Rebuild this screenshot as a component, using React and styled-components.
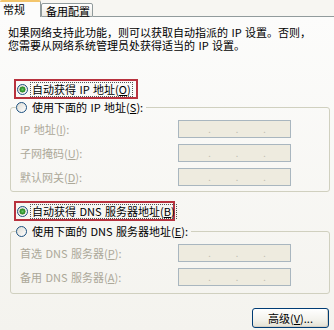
import React from 'react';
import styled, {createGlobalStyle} from "styled-components";

const Global = createGlobalStyle`
html, body{
    margin: 0;
    padding: 0;
    background: #f7f6f2;
}
body{
    font-family: "Noto Sans CJK SC", "Noto Sans", sans-serif;
    font-size: 11px;
    color: #000;
    word-spacing: 1px;
}
`;

export default function App() {
    return (
        <Window>
            <Global/>
            <TabStrip>
                <Tab $active>常规</Tab>
                <Tab>备用配置</Tab>
                <TabFill/>
            </TabStrip>
            <Panel>
                <Intro>
                    <IntroLine>如果网络支持此功能，则可以获取自动指派的 IP 设置。否则，</IntroLine>
                    <IntroLine>您需要从网络系统管理员处获得适当的 IP 设置。</IntroLine>
                </Intro>

                <Highlight $top={28} $width={124}>
                    <Radio $checked/>
                    <Focus>自动获得 IP 地址(<u>O</u>)</Focus>
                </Highlight>

                <Group $top={2} $pb={5}>
                    <Legend>
                        <Radio/>
                        <span>使用下面的 IP 地址(<u>S</u>):</span>
                    </Legend>
                    <Field label={<>IP 地址(<u>I</u>):</>}/>
                    <Field label={<>子网掩码(<u>U</u>):</>}/>
                    <Field label={<>默认网关(<u>D</u>):</>}/>
                </Group>

                <Highlight $top={9} $width={161}>
                    <Radio $checked/>
                    <Focus>自动获得 DNS 服务器地址(<u>B</u>)</Focus>
                </Highlight>

                <Group $top={4} $pb={7}>
                    <Legend>
                        <Radio/>
                        <span>使用下面的 DNS 服务器地址(<u>E</u>):</span>
                    </Legend>
                    <Field label={<>首选 DNS 服务器(<u>P</u>):</>}/>
                    <Field label={<>备用 DNS 服务器(<u>A</u>):</>}/>
                </Group>

                <Footer>
                    <Button>高级(<u>V</u>)...</Button>
                </Footer>
            </Panel>
        </Window>
    )
}

function Field({label}) {
    return (
        <Row>
            <RowLabel>{label}</RowLabel>
            <IpBox>
                <Dot>.</Dot><Dot>.</Dot><Dot>.</Dot>
            </IpBox>
        </Row>
    )
}

const Window = styled.div`
width: 334px;
height: 330px;
overflow: hidden;
display: flex;
flex-direction: column;
`;

const TabStrip = styled.div`
display: flex;
align-items: flex-end;
height: 17px;
`;

const Tab = styled.div`
box-sizing: border-box;
height: ${p => p.$active ? 17 : 14}px;
padding: ${p => p.$active ? '1px 0 0 3px' : '0 0 0 4px'};
width: ${p => p.$active ? 41 : 52}px;
line-height: ${p => p.$active ? 12 : 14}px;
word-spacing: 0;
background: ${p => p.$active ? '#fcfcfb' : 'linear-gradient(#ffffff, #ecebe5)'};
border: 1px solid #919b9c;
border-left: ${p => p.$active ? 'none' : '1px solid #919b9c'};
border-bottom: ${p => p.$active ? 'none' : '1px solid #919b9c'};
border-top: ${p => p.$active ? '2px solid #f3c56b' : '1px solid #919b9c'};
border-radius: 2px 2px 0 0;
`;

const TabFill = styled.div`
flex: 1;
height: 1px;
background: #919b9c;
`;

const Panel = styled.div`
flex: 1;
display: flex;
flex-direction: column;
background: linear-gradient(#fcfcfb, #f4f3ee);
`;

const Intro = styled.div`
margin: 9px 0 0 8px;
display: flex;
flex-direction: column;
gap: 1px;
`;

const IntroLine = styled.div`
height: 12px;
line-height: 12px;
white-space: nowrap;
overflow: visible;
`;

const Highlight = styled.div`
box-sizing: border-box;
display: flex;
align-items: center;
gap: 3px;
width: ${p => p.$width}px;
height: 20px;
margin: ${p => p.$top}px 0 0 14px;
padding-left: 1px;
border: 2px solid #b8323e;
`;

const Focus = styled.span`
padding: 0 1px;
line-height: 13px;
outline: 1px dotted #555;
white-space: nowrap;
`;

const Radio = styled.span`
box-sizing: border-box;
flex: none;
width: 11px;
height: 11px;
border-radius: 50%;
border: 1px solid #1c5180;
background: ${p => p.$checked
    ? 'radial-gradient(circle, #6cc46c 0, #2c962c 2px, #4a8a3a 2.8px, transparent 3.3px), linear-gradient(135deg, #dcdbd3, #ffffff)'
    : 'linear-gradient(135deg, #dcdbd3, #ffffff)'};
`;

const Group = styled.fieldset`
margin: ${p => p.$top}px 4px 0 10px;
padding: 0 0 ${p => p.$pb}px 9px;
border: 1px solid #d0d0bf;
border-radius: 3px;
min-width: 0;
display: flex;
flex-direction: column;
gap: 6px;
`;

const Legend = styled.legend`
display: flex;
align-items: center;
gap: 5px;
height: 12px;
margin-left: -4px;
padding: 0 3px 0 0;
white-space: nowrap;
margin-bottom: 7px;
`;

const Row = styled.div`
display: flex;
align-items: center;
height: 18px;
`;

const RowLabel = styled.div`
width: 158px;
color: #aca899;
white-space: nowrap;
`;

const IpBox = styled.div`
box-sizing: border-box;
width: 113px;
height: 18px;
border: 1px solid #a9b6bf;
background: #eeebdf;
display: flex;
align-items: center;
justify-content: center;
gap: 25px;
padding-left: 5px;
color: #c2bfb2;
`;

const Dot = styled.span`
font-size: 9px;
line-height: 9px;
`;

const Footer = styled.div`
display: flex;
justify-content: flex-end;
margin-top: 14px;
padding-right: 5px;
`;

const Button = styled.button`
box-sizing: border-box;
width: 77px;
height: 20px;
padding: 0;
font-family: "Noto Sans CJK SC", "Noto Sans", sans-serif;
font-size: 11px;
color: #000;
border: 1px solid #003c74;
border-radius: 3px;
background: linear-gradient(#ffffff, #f3f2ec 60%, #e3e0d3);
box-shadow: inset -1px -1px 0 #d6d0c5;
`;
